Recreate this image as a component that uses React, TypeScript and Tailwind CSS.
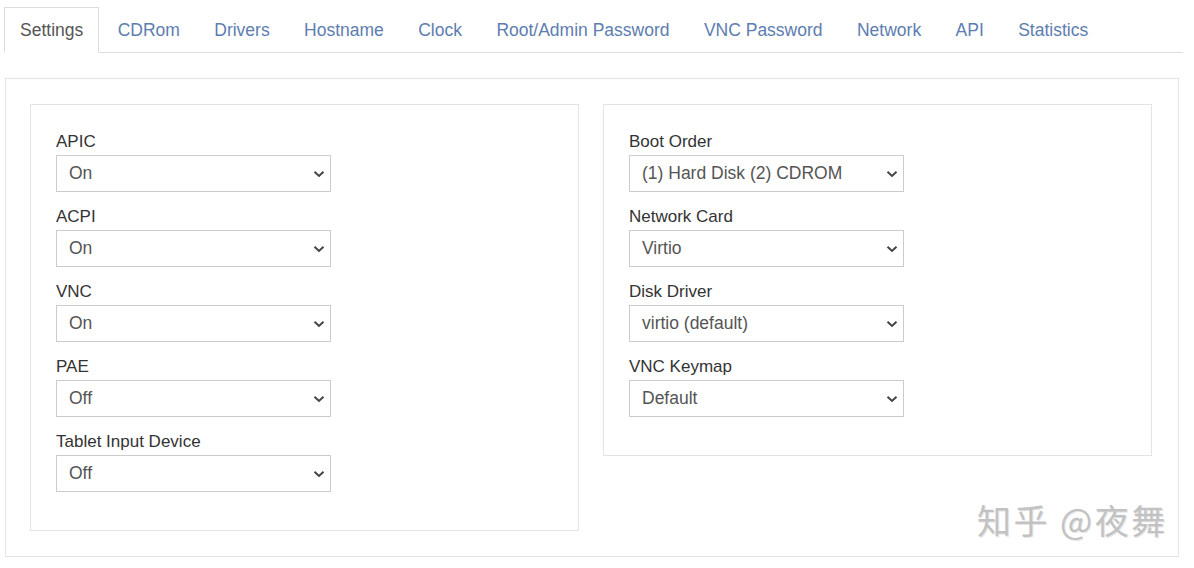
import React from "react"

const tabs = [
  "Settings",
  "CDRom",
  "Drivers",
  "Hostname",
  "Clock",
  "Root/Admin Password",
  "VNC Password",
  "Network",
  "API",
  "Statistics",
]

interface Field {
  label: string
  value: string
  options: string[]
}

const leftFields: Field[] = [
  { label: "APIC", value: "On", options: ["On", "Off"] },
  { label: "ACPI", value: "On", options: ["On", "Off"] },
  { label: "VNC", value: "On", options: ["On", "Off"] },
  { label: "PAE", value: "Off", options: ["On", "Off"] },
  { label: "Tablet Input Device", value: "Off", options: ["On", "Off"] },
]

const rightFields: Field[] = [
  {
    label: "Boot Order",
    value: "(1) Hard Disk (2) CDROM",
    options: ["(1) Hard Disk (2) CDROM", "(1) CDROM (2) Hard Disk"],
  },
  { label: "Network Card", value: "Virtio", options: ["Virtio", "e1000", "rtl8139"] },
  { label: "Disk Driver", value: "virtio (default)", options: ["virtio (default)", "ide", "scsi"] },
  { label: "VNC Keymap", value: "Default", options: ["Default", "en-us", "de"] },
]

function Chevron() {
  return (
    <svg
      className="pointer-events-none absolute right-[6px] top-1/2 -translate-y-1/2"
      width="12"
      height="8"
      viewBox="0 0 12 8"
      fill="none"
    >
      <path d="M1.5 1.8 6 6 10.5 1.8" stroke="#444" strokeWidth="2" />
    </svg>
  )
}

function SelectField({ field }: { field: Field }) {
  return (
    <div className="mb-[13px]">
      <label className="block h-[22px] leading-[24px] mb-[3px] text-[17px] text-[#333333]">
        {field.label}
      </label>
      <div className="relative w-[275px]">
        <select
          defaultValue={field.value}
          className="appearance-none w-full h-[37px] border border-[#cccccc] bg-white pl-[12px] pr-[24px] text-[17.5px] text-[#555555] outline-none rounded-none font-['Liberation_Sans',Arial,sans-serif]"
        >
          {field.options.map((o) => (
            <option key={o} value={o}>
              {o}
            </option>
          ))}
        </select>
        <Chevron />
      </div>
    </div>
  )
}

function Card({ fields }: { fields: Field[] }) {
  return (
    <div className="w-[549px] border border-[#e4e4e4] px-[25px] pt-[25px] pb-[25px]">
      {fields.map((f) => (
        <SelectField key={f.label} field={f} />
      ))}
    </div>
  )
}

export default function App() {
  return (
    <div className="relative w-[1194px] h-[568px] bg-white overflow-hidden font-['Liberation_Sans',Arial,sans-serif]">
      <div className="pl-[4px] pt-[7px]">
        <ul className="flex w-[1179px] border-b border-[#dddddd]">
          {tabs.map((t, i) => {
            const active = i === 0
            return (
              <li key={t} className="-mb-px mr-[2.4px]">
                <a
                  className={
                    active
                      ? "flex items-center h-[46px] px-[15px] border border-[#dddddd] border-b-white bg-white text-[17.5px] text-[#555555] cursor-default"
                      : "flex items-center h-[46px] px-[15px] border border-transparent text-[17.5px] text-[#5d7db0] cursor-pointer"
                  }
                >
                  {t}
                </a>
              </li>
            )
          })}
        </ul>
      </div>

      <div className="ml-[5px] mt-[25px] w-[1174px] border border-[#e4e4e4] px-[24px] py-[25px] flex gap-[24px] items-start">
        <Card fields={leftFields} />
        <Card fields={rightFields} />
      </div>

      <div className="absolute left-[977px] top-[500px] text-[34px] leading-[40px] tracking-[2.5px] text-[#c2c2c2] font-['Noto_Sans_CJK_SC','Noto_Sans',sans-serif] [text-shadow:1px_1px_0_#e6e6e6]">
        知乎&nbsp;@夜舞
      </div>
    </div>
  )
}
